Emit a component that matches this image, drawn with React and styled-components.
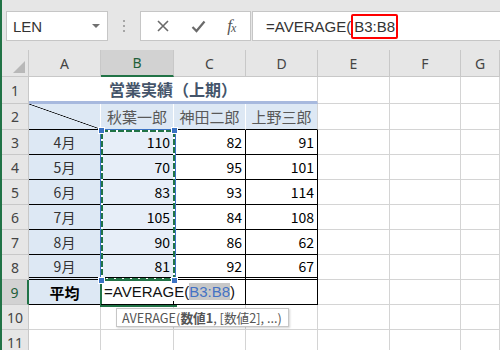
import React from 'react'
import styled, { createGlobalStyle } from 'styled-components'

const GlobalStyle = createGlobalStyle`
  html, body { margin: 0; padding: 0; background: #fff; }
  body { font-family: "Noto Sans CJK JP", "Noto Sans", sans-serif; }
`

const GREEN = '#217346'
const GRID = '#d4d4d4'
const HEAD_BG = '#e6e6e6'
const LIGHT_BLUE = '#dde8f4'
const SEL_BLUE = '#e7eef8'

const Page = styled.div`
  width: 500px;
  height: 350px;
  overflow: hidden;
  box-sizing: border-box;
  border-left: 2px solid ${GREEN};
  display: flex;
  flex-direction: column;
  background: #fff;
`

const FormulaBar = styled.div`
  height: 50px;
  flex: none;
  background: ${HEAD_BG};
  display: flex;
  align-items: flex-start;
  padding: 11px 0 0 4px;
  box-sizing: border-box;
`

const Box = styled.div`
  height: 30px;
  box-sizing: border-box;
  background: #fff;
  border: 1px solid #c6c6c6;
  display: flex;
  align-items: center;
`

const NameBox = styled(Box)`
  width: 102px;
  justify-content: space-between;
  padding: 0 7px 0 6px;
  font-family: "Liberation Sans", sans-serif;
  font-size: 15px;
  color: #333;
`

const Caret = styled.span`
  width: 0;
  height: 0;
  border-left: 4px solid transparent;
  border-right: 4px solid transparent;
  border-top: 4px solid #707070;
`

const Grip = styled.div`
  width: 32px;
  height: 30px;
  display: flex;
  flex-direction: column;
  align-items: center;
  justify-content: center;
  gap: 3px;

  span {
    width: 2px;
    height: 2px;
    background: #a6a6a6;
  }
`

const IconBox = styled(Box)`
  width: 111px;
  justify-content: space-around;
  padding: 0 4px;
  color: #666;
`

const Fx = styled.span`
  font-family: "Liberation Serif", serif;
  font-style: italic;
  font-size: 17px;
  color: #555;
  letter-spacing: -1px;

  sub {
    font-size: 12px;
    vertical-align: -1px;
  }
`

const FormulaInput = styled(Box)`
  flex: 1;
  margin-left: 1px;
  border-right: none;
  padding-left: 13px;
  font-family: "Liberation Sans", sans-serif;
  font-size: 15px;
  color: #333;
`

const RefBox = styled.span`
  border: 2px solid #ff0000;
  border-radius: 2px;
  padding: 2px 1px;
`

const Sheet = styled.div`
  position: relative;
  display: grid;
  grid-template-columns: 27px 72px 73px 72px 72px 72px 71px 1fr;
  grid-template-rows: 27px 27px 26px repeat(9, 25px);
`

const Corner = styled.div`
  background: ${HEAD_BG};
  border-right: 1px solid #c8c8c8;
  border-bottom: 1px solid #c8c8c8;
  position: relative;

  &::after {
    content: '';
    position: absolute;
    right: 3px;
    bottom: 3px;
    width: 0;
    height: 0;
    border-left: 12px solid transparent;
    border-bottom: 12px solid #b8b8b8;
  }
`

const ColHead = styled.div`
  box-sizing: border-box;
  display: flex;
  align-items: center;
  justify-content: center;
  background: ${p => (p.$active ? '#d2d2d2' : HEAD_BG)};
  border-right: 1px solid #c8c8c8;
  border-bottom: ${p => (p.$active ? `2px solid ${GREEN}` : '1px solid #c8c8c8')};
  color: ${p => (p.$active ? '#1f5f3a' : '#444')};
  font-family: "Noto Sans", sans-serif;
  font-size: 14px;
`

const RowHead = styled.div`
  box-sizing: border-box;
  display: flex;
  align-items: center;
  justify-content: center;
  background: ${p => (p.$active ? '#d2d2d2' : HEAD_BG)};
  border-right: ${p => (p.$active ? `2px solid ${GREEN}` : '1px solid #c8c8c8')};
  border-bottom: 1px solid #c8c8c8;
  color: ${p => (p.$active ? '#1f5f3a' : '#444')};
  font-family: "Noto Sans", sans-serif;
  font-size: 14px;
`

const justify = { left: 'flex-start', center: 'center', right: 'flex-end' }

const Cell = styled.div`
  box-sizing: border-box;
  display: flex;
  align-items: center;
  justify-content: ${p => justify[p.$align || 'left']};
  padding: 0 3px 0 3px;
  background: ${p => p.$bg || '#fff'};
  border-right: 1px solid ${p => p.$r || GRID};
  border-bottom: ${p => p.$b || `1px solid ${GRID}`};
  color: ${p => p.$color || '#000'};
  font-size: ${p => p.$size || 14}px;
  font-weight: ${p => (p.$bold ? 700 : 400)};
  white-space: nowrap;
  grid-column: ${p => (p.$span ? `span ${p.$span}` : 'auto')};
`

const Diagonal = styled(Cell)`
  background: linear-gradient(
    to top right,
    ${LIGHT_BLUE} calc(50% - 0.7px),
    #000 50%,
    ${LIGHT_BLUE} calc(50% + 0.7px)
  );
`

const EditCell = styled(Cell)`
  position: relative;
  z-index: 4;
  overflow: visible;
  background: transparent;
  padding-left: 3px;
`

const EditText = styled.span`
  background: #fff;
  padding-right: 4px;
  font-family: "Liberation Sans", sans-serif;
  font-size: 15px;
  line-height: 18px;
  color: #111;

  .ref {
    color: #4472c4;
    background: #c8c8c8;
  }
`

const Ants = styled.svg`
  position: absolute;
  left: 98px;
  top: 79px;
  z-index: 3;
  overflow: visible;
`

const Handle = styled.div`
  position: absolute;
  width: 5px;
  height: 5px;
  background: #3b73c4;
  border: 1px solid #fff;
  z-index: 5;
`

const ActiveCell = styled.div`
  position: absolute;
  left: 98px;
  top: 229px;
  width: 77px;
  height: 28px;
  box-sizing: border-box;
  border: 2px solid ${GREEN};
  border-right: none;
  z-index: 3;
`

const Tooltip = styled.div`
  position: absolute;
  left: 114px;
  top: 258px;
  height: 19px;
  box-sizing: border-box;
  padding: 0 6px 0 5px;
  display: flex;
  align-items: center;
  background: #fff;
  border: 1px solid #c6c6c6;
  box-shadow: 1px 1px 2px rgba(0, 0, 0, 0.18);
  font-size: 12.7px;
  color: #555;
  white-space: nowrap;
  z-index: 5;

  b {
    font-weight: 700;
  }
`

const cols = ['A', 'B', 'C', 'D', 'E', 'F', 'G']
const names = ['秋葉一郎', '神田二郎', '上野三郎']
const data = [
  ['4月', 110, 82, 91],
  ['5月', 70, 95, 101],
  ['6月', 83, 93, 114],
  ['7月', 105, 84, 108],
  ['8月', 90, 86, 62],
  ['9月', 81, 92, 67],
]

const Blank = ({ n }) =>
  Array.from({ length: n }, (_, i) => <Cell key={'b' + i} />)

const App = () => {
  const line = '1px solid #000'
  const dbl = '3px double #000'

  return (
    <Page>
      <GlobalStyle />
      <FormulaBar>
        <NameBox>
          LEN
          <Caret />
        </NameBox>
        <Grip>
          <span />
          <span />
          <span />
        </Grip>
        <IconBox>
          <svg width="14" height="14" viewBox="0 0 14 14">
            <path d="M2 2 L12 12 M12 2 L2 12" stroke="#6a6a6a" strokeWidth="1.6" fill="none" />
          </svg>
          <svg width="15" height="13" viewBox="0 0 15 13">
            <path d="M1.5 7 L5.5 11 L13.5 1.5" stroke="#6a6a6a" strokeWidth="2.2" fill="none" />
          </svg>
          <Fx>
            f<sub>x</sub>
          </Fx>
        </IconBox>
        <FormulaInput>
          =AVERAGE(<RefBox>B3:B8</RefBox>
        </FormulaInput>
      </FormulaBar>

      <Sheet>
        <Corner />
        {cols.map(c => (
          <ColHead key={c} $active={c === 'B'}>
            {c}
          </ColHead>
        ))}

        <RowHead>1</RowHead>
        <Cell $span={4} $align="center" $bold $size={16} $color="#44546a" $b="3px solid #a7b9de">
          営業実績（上期）
        </Cell>
        <Blank n={3} />

        <RowHead>2</RowHead>
        <Diagonal $r="#fff" $b={line} />
        {names.map((n, i) => (
          <Cell key={n} $align="center" $bg={LIGHT_BLUE} $size={15} $color="#595959" $r={i < 2 ? '#fff' : GRID} $b={line}>
            {n}
          </Cell>
        ))}
        <Blank n={3} />

        {data.map((row, r) => {
          const b = r === data.length - 1 ? dbl : line
          return (
            <React.Fragment key={row[0]}>
              <RowHead>{r + 3}</RowHead>
              <Cell $align="center" $bg={LIGHT_BLUE} $color="#333" $r="#000" $b={b}>
                {row[0]}
              </Cell>
              <Cell $align="right" $bg={SEL_BLUE} $r="#000" $b={b}>
                {row[1]}
              </Cell>
              <Cell $align="right" $r="#000" $b={b}>
                {row[2]}
              </Cell>
              <Cell $align="right" $r="#000" $b={b}>
                {row[3]}
              </Cell>
              <Blank n={3} />
            </React.Fragment>
          )
        })}

        <RowHead $active>9</RowHead>
        <Cell $align="center" $bg={LIGHT_BLUE} $bold $size={15} $r="#000" $b={line}>
          平均
        </Cell>
        <EditCell $r="#000" $b={line}>
          <EditText>
            =AVERAGE(<span className="ref">B3:B8</span>)
          </EditText>
        </EditCell>
        <Cell $r="#000" $b={line} />
        <Cell $r="#000" $b={line} />
        <Blank n={3} />

        <RowHead>10</RowHead>
        <Blank n={7} />
        <RowHead>11</RowHead>
        <Blank n={7} />

        <Ants width="76" height="152" viewBox="0 0 76 152">
          <rect x="0.5" y="0.5" width="75" height="151" fill="none" stroke="#3b73c4" strokeWidth="1" />
          <rect x="2" y="2" width="72" height="148" fill="none" stroke="#fff" strokeWidth="2" />
          <rect x="2" y="2" width="72" height="148" fill="none" stroke={GREEN} strokeWidth="2" strokeDasharray="6 2" />
        </Ants>
        <Handle style={{ left: 96, top: 77 }} />
        <Handle style={{ left: 169, top: 77 }} />
        <Handle style={{ left: 96, top: 227 }} />
        <Handle style={{ left: 169, top: 227 }} />
        <ActiveCell />
        <Tooltip>
          AVERAGE(<b>数値1</b>, [数値2], ...)
        </Tooltip>
      </Sheet>
    </Page>
  )
}

export default App
